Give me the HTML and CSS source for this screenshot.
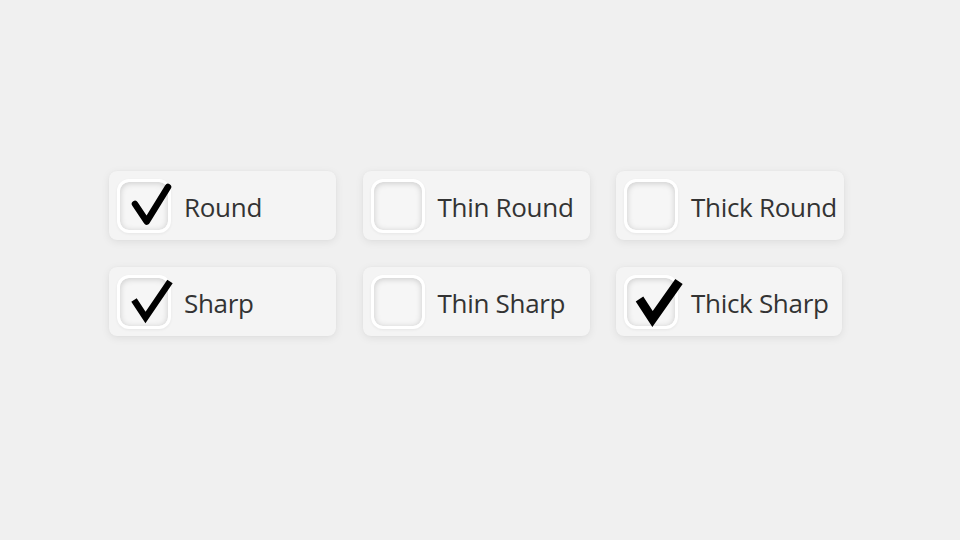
FILE: index.html
```html
<!DOCTYPE html>
<html>
<head>
<meta charset="utf-8">
<link rel="stylesheet" href="styles.css">
</head>
<body>
<div class="grid">
  <label class="card c1">
    <span class="box">
      <svg class="check" viewBox="0 0 60 60" width="60" height="60"><polyline points="18,25 29.7,42.5 51,8" fill="none" stroke="#000" stroke-width="6.5" stroke-linecap="round" stroke-linejoin="round"/></svg>
    </span>
    <span class="label">Round</span>
  </label>
  <label class="card c2">
    <span class="box"></span>
    <span class="label">Thin Round</span>
  </label>
  <label class="card c3">
    <span class="box"></span>
    <span class="label">Thick Round</span>
  </label>
  <label class="card c1">
    <span class="box">
      <svg class="check" viewBox="0 0 60 60" width="60" height="60"><polyline points="17,25 28.5,42.5 53,6.5" fill="none" stroke="#000" stroke-width="6.5" stroke-linecap="butt" stroke-linejoin="miter"/></svg>
    </span>
    <span class="label">Sharp</span>
  </label>
  <label class="card c2">
    <span class="box"></span>
    <span class="label">Thin Sharp</span>
  </label>
  <label class="card c3 short">
    <span class="box">
      <svg class="check" viewBox="0 0 60 60" width="60" height="60"><polyline points="15.5,24 28.5,44 55,6.5" fill="none" stroke="#000" stroke-width="9" stroke-linecap="butt" stroke-linejoin="miter"/></svg>
    </span>
    <span class="label">Thick Sharp</span>
  </label>
</div>
</body>
</html>
```
FILE: styles.css
```css
html, body {
  margin: 0;
  padding: 0;
  background: #f0f0f0;
  width: 960px;
  height: 540px;
  overflow: hidden;
}
.grid {
  display: grid;
  grid-template-columns: 227px 227px 228px;
  column-gap: 26.5px;
  row-gap: 27px;
  padding: 171px 0 0 109px;
  justify-items: start;
}
.card {
  box-sizing: border-box;
  width: 227px;
  height: 69px;
  display: flex;
  align-items: center;
  gap: 13px;
  padding: 0 8px;
  background: #f4f4f4;
  border-radius: 8px;
  box-shadow: 0 2px 8px rgba(0, 0, 0, 0.08), 0 0 2px rgba(0, 0, 0, 0.03);
  font-family: "Open Sans", "Noto Sans", sans-serif;
  font-size: 26px;
  letter-spacing: -0.3px;
  color: #333;
}
.card.c3 { width: 228px; }
.card.c3.short { width: 226px; }
.box {
  position: relative;
  box-sizing: border-box;
  flex: none;
  width: 54px;
  height: 54px;
  border: 3px solid #fff;
  border-radius: 12px;
  background: #f6f6f6;
  box-shadow: inset 0 1px 6px rgba(0, 0, 0, 0.18), 0 1px 3px rgba(0, 0, 0, 0.06);
}
.check {
  position: absolute;
  left: -3px;
  top: -3px;
  overflow: visible;
}
.label {
  line-height: 1;
  white-space: nowrap;
  padding-top: 2px;
}
```
